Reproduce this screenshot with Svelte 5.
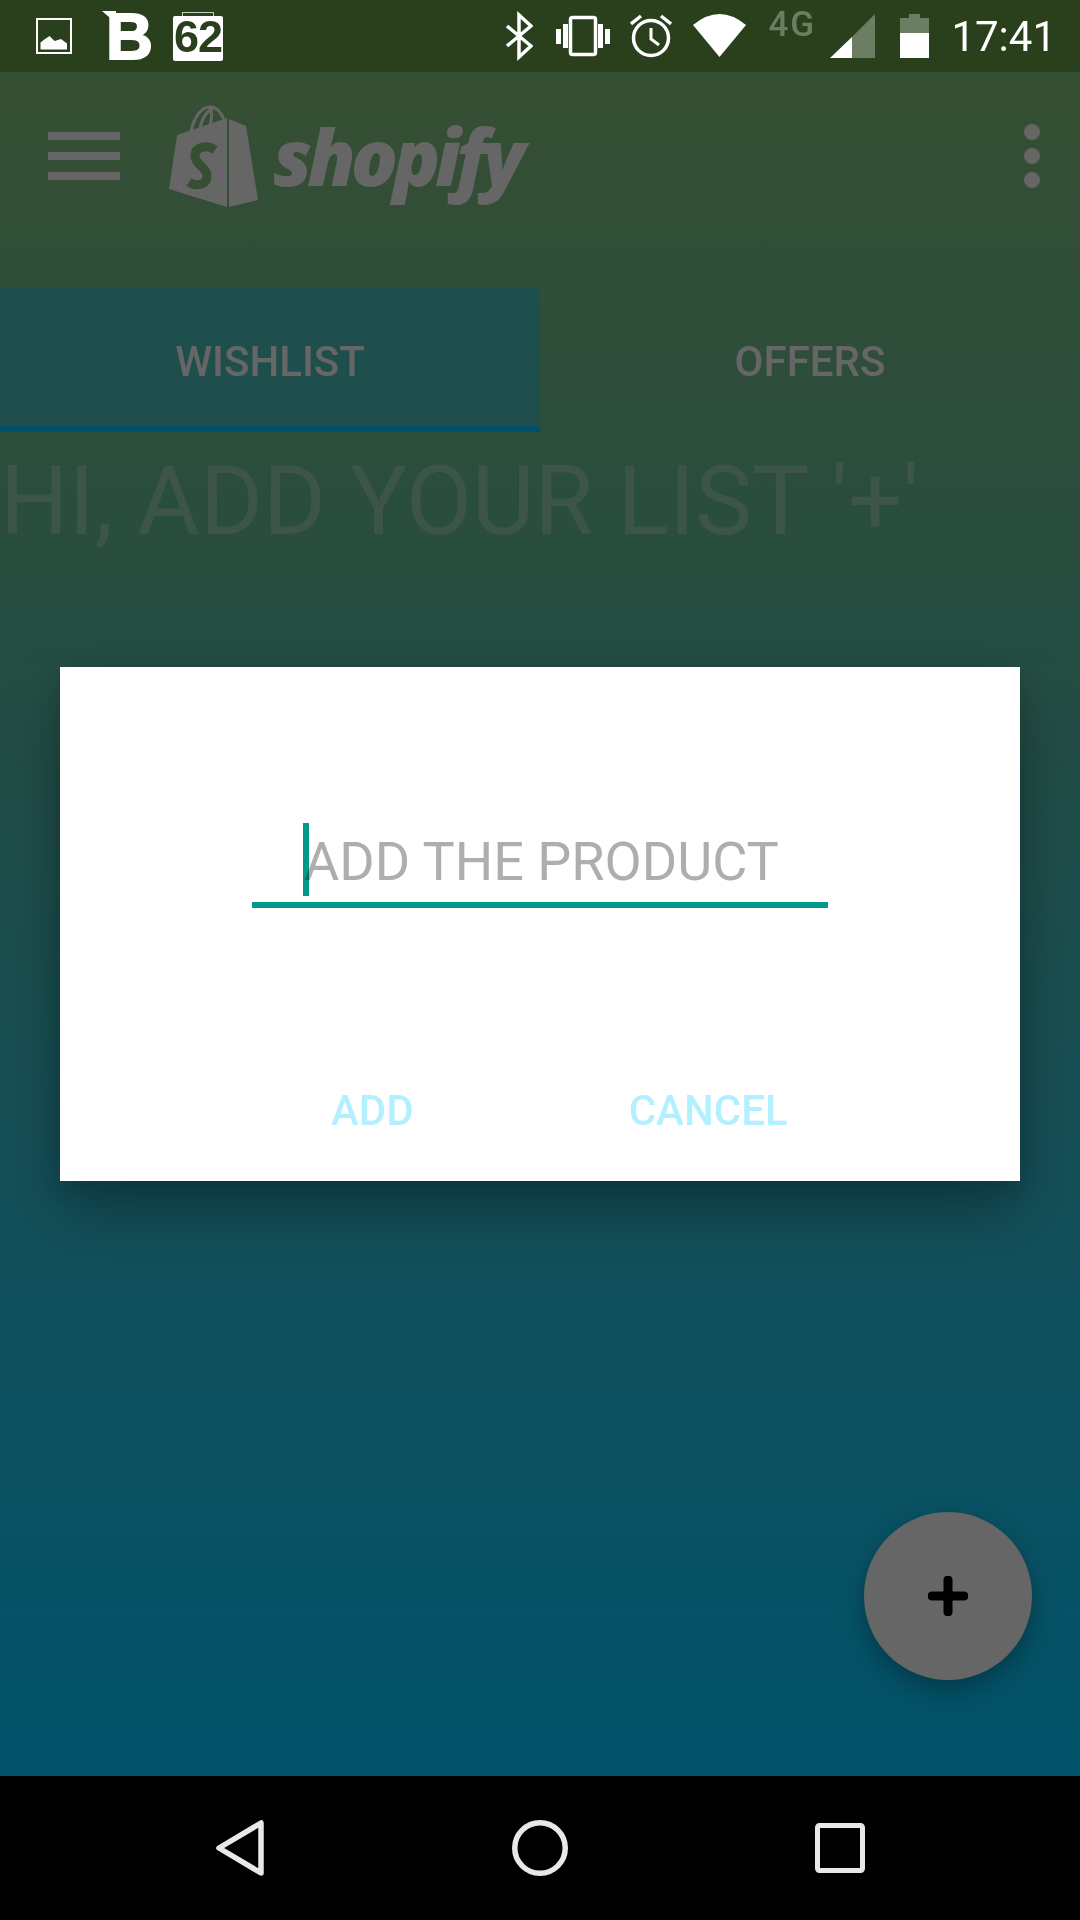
<script>
  const tabs = [
    { label: 'WISHLIST', active: true },
    { label: 'OFFERS', active: false }
  ];
</script>

<div class="screen">
  <header class="status">
    <svg class="s-img" viewBox="0 0 36 72" width="36" height="72">
      <rect x="1" y="19" width="34" height="34" fill="none" stroke="#fff" stroke-width="2" />
      <path d="M4.5 49.5V42.500L9 39L13.500 36L18.500 41L25 39L31 43.500V49.500Z" fill="#fff" />
    </svg>
    <div class="b-logo"><span class="b-tip"></span><span class="b-letter">B</span></div>
    <div class="cal"><span class="cal-top"></span><span class="cal-num">62</span></div>

    <div class="spacer"></div>

    <svg class="s-bt" viewBox="0 0 27 72" width="27" height="72">
      <path d="M1 26L25 46L13 57V15L25 26L1 46" fill="none" stroke="#fff" stroke-width="3.500" />
    </svg>
    <svg class="s-vib" viewBox="0 0 54 72" width="54" height="72">
      <rect x="14.500" y="17.500" width="25" height="37" rx="2" fill="none" stroke="#fff" stroke-width="3.500" />
      <rect x="0" y="29" width="5" height="15" fill="#fff" />
      <rect x="7" y="24" width="5" height="24" fill="#fff" />
      <rect x="42" y="24" width="5" height="24" fill="#fff" />
      <rect x="49" y="29" width="5" height="15" fill="#fff" />
    </svg>
    <svg class="s-alarm" viewBox="0 0 42 72" width="42" height="72">
      <circle cx="21" cy="38" r="17.500" fill="none" stroke="#fff" stroke-width="3.500" />
      <path d="M21 28V39L29 45" fill="none" stroke="#fff" stroke-width="3" />
      <path d="M1 24L11 16M41 24L31 16" fill="none" stroke="#fff" stroke-width="3.500" />
    </svg>
    <svg class="s-wifi" viewBox="0 0 53 72" width="53" height="72">
      <path d="M0 25Q26.500 3 53 25L26.500 57Z" fill="#fff" />
    </svg>
    <span class="net">4G</span>
    <svg class="s-signal" viewBox="0 0 45 72" width="45" height="72">
      <path d="M45 14V58H22V37Z" fill="#6b7e63" />
      <path d="M0 58L22 37V58Z" fill="#fff" />
    </svg>
    <svg class="s-batt" viewBox="0 0 29 72" width="29" height="72">
      <path d="M0 18H9V14H20V18H29V33H0Z" fill="#6b7e63" />
      <rect x="0" y="33" width="29" height="25" fill="#fff" />
    </svg>
    <span class="clock">17:41</span>
  </header>

  <div class="toolbar">
    <div class="burger"><span></span><span></span><span></span></div>
    <svg class="bag" viewBox="0 0 89 102" width="89" height="102">
      <path d="M0 84L8 30L58 13V102Z" fill="#666" />
      <path d="M60 14L77 21L89 95L60 102Z" fill="#666" />
      <path d="M22 27C25 11 33 2 41 2C48 2 52 7 55 15M31 24C33 13 38 6 44 4M41 20C43 13 43 7 41 3" fill="none" stroke="#666" stroke-width="3" />
      <path d="M46 45C37 39 26 42 26 51C26 60 38 62 38 71C38 80 27 82 20 77" fill="none" stroke="#364f33" stroke-width="9" />
    </svg>
    <span class="wordmark">shopify</span>
    <div class="kebab"><span></span><span></span><span></span></div>
  </div>

  <nav class="tabs">
    {#each tabs as tab}
      <div class="tab" class:active={tab.active}>{tab.label}</div>
    {/each}
  </nav>

  <h1 class="hello">HI, ADD YOUR LIST '+'</h1>

  <div class="dialog">
    <div class="field">
      <span class="caret"></span>
      <span class="placeholder">ADD THE PRODUCT</span>
    </div>
    <div class="actions">
      <span class="add">ADD</span>
      <span class="cancel">CANCEL</span>
    </div>
  </div>

  <div class="fab">
    <svg viewBox="0 0 40 40" width="40" height="40">
      <path d="M20 4V36M4 20H36" stroke="#000" stroke-width="9" stroke-linecap="round" />
    </svg>
  </div>

  <footer class="navbar">
    <svg class="nav-back" viewBox="0 0 48 56" width="48" height="56">
      <path d="M45 3V53L3 28Z" fill="none" stroke="#e8e8e8" stroke-width="5.500" stroke-linejoin="round" />
    </svg>
    <svg class="nav-home" viewBox="0 0 56 56" width="56" height="56">
      <circle cx="28" cy="28" r="25.250" fill="none" stroke="#e8e8e8" stroke-width="5.500" />
    </svg>
    <svg class="nav-recent" viewBox="0 0 50 50" width="50" height="50">
      <rect x="2.500" y="2.500" width="45" height="45" rx="2" fill="none" stroke="#e8e8e8" stroke-width="5" />
    </svg>
  </footer>
</div>

<style>
  :global(body) {
    margin: 0;
    background: #000;
  }

  .screen {
    position: relative;
    width: 1080px;
    height: 1920px;
    overflow: hidden;
    display: flex;
    flex-direction: column;
    font-family: Roboto, sans-serif;
    background: linear-gradient(180deg, #364f33 72px, #284d3f 560px, #14505a 1200px, #00526a 1776px);
  }

  .status {
    height: 72px;
    flex: none;
    display: flex;
    align-items: flex-start;
    padding: 0 24px 0 36px;
    background: #2a401d;
    color: #fff;
  }

  .status svg {
    display: block;
    flex: none;
  }

  .b-logo {
    position: relative;
    width: 46px;
    height: 72px;
    margin-left: 30px;
  }

  .b-letter {
    position: absolute;
    left: 4px;
    top: 1px;
    font-family: "Liberation Sans", sans-serif;
    font-weight: 700;
    font-size: 65px;
    line-height: 72px;
    -webkit-text-stroke: 2px #fff;
  }

  .b-tip {
    position: absolute;
    left: 0;
    top: 11px;
    width: 14px;
    height: 12px;
    background: #fff;
    clip-path: polygon(0 0, 100% 0, 100% 100%);
  }

  .cal {
    position: relative;
    width: 50px;
    height: 45px;
    margin: 16px 0 0 25px;
    background: #fff;
    border-radius: 2px;
    text-align: center;
  }

  .cal-top {
    position: absolute;
    left: 9px;
    right: 9px;
    top: -4px;
    height: 4px;
    box-sizing: border-box;
    border: 1px solid #c6cec2;
    border-bottom: 0;
  }

  .cal-num {
    position: absolute;
    left: 0;
    right: 0;
    top: 3px;
    font-family: "Liberation Sans", sans-serif;
    font-weight: 700;
    font-size: 45px;
    line-height: 36px;
    letter-spacing: -1px;
    color: #2a401d;
  }

  .spacer {
    flex: 1;
  }

  .s-vib {
    margin-left: 23px;
  }

  .s-alarm {
    margin-left: 20px;
  }

  .s-wifi {
    margin-left: 21px;
  }

  .net {
    margin-left: 22px;
    width: 49px;
    margin-top: 7px;
    font-weight: 500;
    font-size: 35px;
    line-height: 36px;
    letter-spacing: 2px;
    white-space: nowrap;
    color: #6b7e63;
  }

  .s-signal {
    margin-left: 13px;
  }

  .s-batt {
    margin-left: 25px;
  }

  .clock {
    margin-left: 22px;
    font-size: 42px;
    line-height: 74px;
    white-space: nowrap;
  }

  .toolbar {
    height: 216px;
    flex: none;
    display: flex;
    align-items: flex-start;
    padding: 0 40px 0 48px;
  }

  .burger {
    width: 72px;
    margin-top: 60px;
    display: flex;
    flex-direction: column;
    gap: 12px;
  }

  .burger span {
    height: 8px;
    background: #666;
  }

  .bag {
    margin: 33px 0 0 49px;
    display: block;
  }

  .wordmark {
    margin: 36px 0 0 15px;
    font-family: "Open Sans", sans-serif;
    font-style: italic;
    font-weight: 800;
    font-size: 78px;
    line-height: 96px;
    letter-spacing: -5px;
    color: #666;
  }

  .kebab {
    margin: 52px 0 0 auto;
    display: flex;
    flex-direction: column;
    gap: 8px;
  }

  .kebab span {
    width: 16px;
    height: 16px;
    border-radius: 50%;
    background: #666;
  }

  .tabs {
    height: 144px;
    flex: none;
    display: flex;
  }

  .tab {
    flex: 1;
    text-align: center;
    font-weight: 500;
    font-size: 42px;
    line-height: 148px;
    color: #666;
    box-sizing: border-box;
  }

  .tab.active {
    background: #1f4f4c;
    border-bottom: 6px solid #01506a;
  }

  .hello {
    margin: 11px 0 0 0;
    font-weight: 400;
    font-size: 96px;
    line-height: 116px;
    color: #3c5547;
    white-space: nowrap;
  }

  .dialog {
    position: absolute;
    left: 60px;
    top: 667px;
    width: 960px;
    height: 514px;
    background: #fff;
    box-shadow: 0 30px 60px rgba(0, 0, 0, 0.3), 0 8px 20px rgba(0, 0, 0, 0.1);
    display: flex;
    flex-direction: column;
    align-items: center;
  }

  .field {
    position: relative;
    width: 576px;
    height: 74px;
    margin-top: 161px;
    border-bottom: 6px solid #02998a;
    box-sizing: content-box;
  }

  .caret {
    position: absolute;
    left: 51px;
    top: -5px;
    width: 6px;
    height: 73px;
    background: #02998a;
  }

  .placeholder {
    position: absolute;
    left: 52px;
    top: -2px;
    font-size: 54px;
    line-height: 72px;
    color: #aeaeae;
    mix-blend-mode: multiply;
    white-space: nowrap;
  }

  .actions {
    width: 100%;
    position: relative;
    margin-top: 178px;
    display: flex;
    font-weight: 500;
    font-size: 42px;
    line-height: 50px;
    color: #b3f0ff;
  }

  .add {
    margin-left: 271px;
  }

  .cancel {
    margin-left: 215px;
  }

  .fab {
    position: absolute;
    left: 864px;
    top: 1512px;
    width: 168px;
    height: 168px;
    border-radius: 50%;
    background: #666;
    box-shadow: 0 10px 24px rgba(0, 0, 0, 0.28);
    display: flex;
    align-items: center;
    justify-content: center;
  }

  .navbar {
    position: absolute;
    left: 0;
    right: 0;
    bottom: 0;
    height: 144px;
    background: #000;
  }

  .navbar svg {
    position: absolute;
    display: block;
  }

  .nav-back {
    left: 216px;
    top: 44px;
  }

  .nav-home {
    left: 512px;
    top: 44px;
  }

  .nav-recent {
    left: 815px;
    top: 47px;
  }
</style>
